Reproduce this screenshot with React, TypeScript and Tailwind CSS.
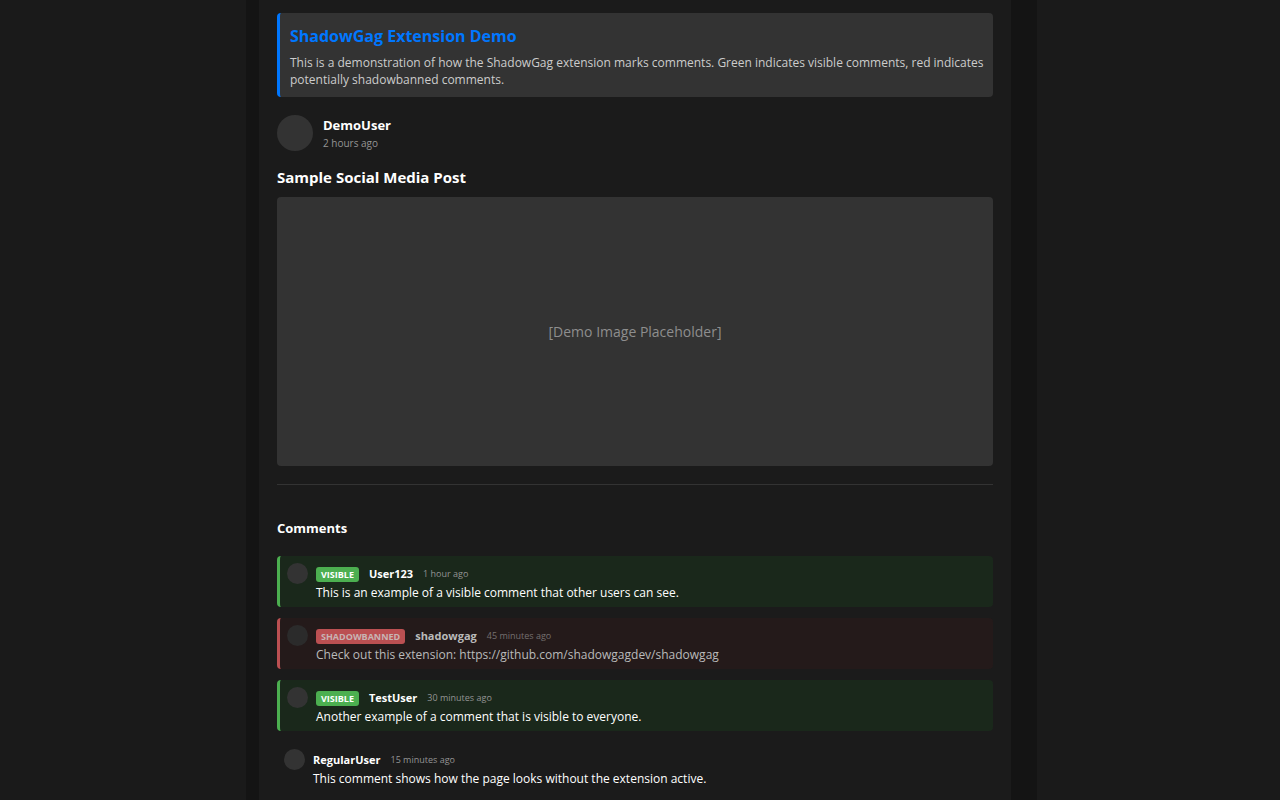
type Status = "visible" | "shadowbanned" | "none";

interface CommentData {
  author: string;
  time: string;
  text: string;
  status: Status;
}

const comments: CommentData[] = [
  {
    author: "User123",
    time: "1 hour ago",
    text: "This is an example of a visible comment that other users can see.",
    status: "visible",
  },
  {
    author: "shadowgag",
    time: "45 minutes ago",
    text: "Check out this extension: https://github.com/shadowgagdev/shadowgag",
    status: "shadowbanned",
  },
  {
    author: "TestUser",
    time: "30 minutes ago",
    text: "Another example of a comment that is visible to everyone.",
    status: "visible",
  },
  {
    author: "RegularUser",
    time: "15 minutes ago",
    text: "This comment shows how the page looks without the extension active.",
    status: "none",
  },
];

const cardStyles: Record<Status, string> = {
  visible: "border-l-3 border-[#4caf50] bg-[#1a281b] text-white",
  shadowbanned: "border-l-3 border-[#bb5052] bg-[#241a1a] text-[#bababa]",
  none: "text-white",
};

const badgeStyles: Record<Status, string> = {
  visible: "bg-[#4caf50] text-white",
  shadowbanned: "bg-[#bb5052] text-[#c8b4b4]",
  none: "",
};

function Comment({ author, time, text, status }: CommentData) {
  const dimmed = status === "shadowbanned";
  return (
    <li className={`flex gap-2 rounded-[4px] px-[7px] pt-[7px] pb-[6px] ${cardStyles[status]}`}>
      <div className={`size-[21px] shrink-0 rounded-full ${dimmed ? "bg-[#2b2b2b]" : "bg-[#333333]"}`} />
      <div className="min-w-0">
        <div className="flex h-[22px] items-center gap-[10px]">
          {status !== "none" && (
            <span className={`rounded-[3px] px-[5px] text-[9px] leading-[15px] font-bold uppercase ${badgeStyles[status]}`}>
              {status}
            </span>
          )}
          <span className="text-[11px] font-bold">{author}</span>
          <span className={`text-[9px] ${dimmed ? "text-[#757070]" : "text-[#949494]"}`}>{time}</span>
        </div>
        <p className="text-[12px] leading-[16px]">{text}</p>
      </div>
    </li>
  );
}

export default function App() {
  return (
    <div className="min-h-screen bg-[#1a1a1a] pl-[3px] font-['Open_Sans','Noto_Sans',sans-serif] text-white">
      <div className="mx-auto min-h-screen max-w-[791px] bg-[#141414] pr-[26px] pl-[13px]">
        <main className="min-h-screen bg-[#1b1b1b] px-[18px] pt-[13px] pb-[7px]">
          <section className="rounded-[4px] border-l-3 border-[#0077ff] bg-[#333333] pt-[11px] pr-[3px] pb-[9px] pl-[10px]">
            <h1 className="mb-[6px] text-[16px] leading-[24px] font-bold text-[#0077ff]">ShadowGag Extension Demo</h1>
            <p className="text-[12px] leading-[17px] text-[#cccccc]">
              This is a demonstration of how the ShadowGag extension marks comments. Green indicates visible comments, red
              indicates potentially shadowbanned comments.
            </p>
          </section>

          <article>
            <header className="mt-[18px] flex items-center gap-[10px]">
              <div className="size-[36px] rounded-full bg-[#333333]" />
              <div>
                <div className="text-[13px] leading-[20px] font-bold">DemoUser</div>
                <div className="text-[10px] leading-[16px] text-[#949494]">2 hours ago</div>
              </div>
            </header>
            <h2 className="mt-[15px] mb-[9px] text-[15px] leading-[22px] font-bold">Sample Social Media Post</h2>
            <div className="flex h-[269px] items-center justify-center rounded-[4px] bg-[#333333] text-[14px] text-[#8e8e8e]">
              [Demo Image Placeholder]
            </div>
          </article>

          <section className="mt-[18px] border-t border-[#333333] pt-[33px]">
            <h3 className="mb-[18px] text-[13px] leading-[20px] font-bold">Comments</h3>
            <ul className="flex flex-col gap-[11px]">
              {comments.map((comment) => (
                <Comment key={comment.author} {...comment} />
              ))}
            </ul>
          </section>
        </main>
      </div>
    </div>
  );
}
